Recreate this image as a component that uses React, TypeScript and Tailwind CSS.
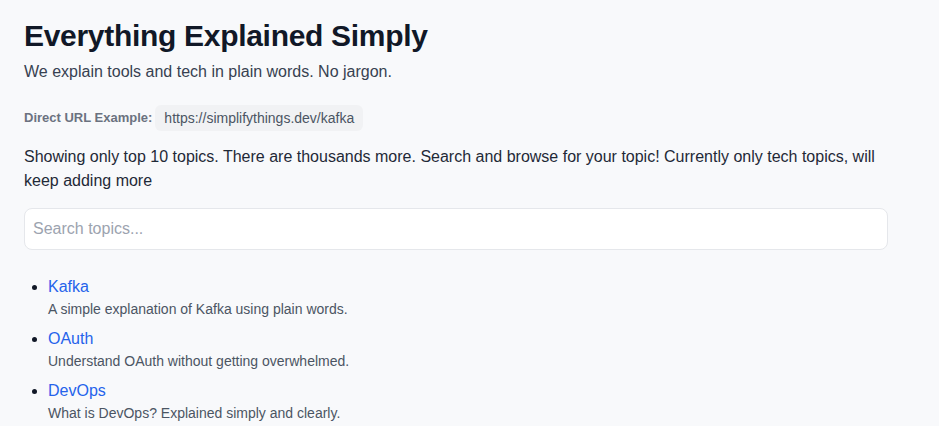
import React, { useState } from 'react';

type Topic = {
    name: string;
    slug: string;
    description: string;
};

const topics: Topic[] = [
    { name: 'Kafka', slug: 'kafka', description: 'A simple explanation of Kafka using plain words.' },
    { name: 'OAuth', slug: 'oauth', description: 'Understand OAuth without getting overwhelmed.' },
    { name: 'DevOps', slug: 'devops', description: 'What is DevOps? Explained simply and clearly.' },
    { name: 'Docker', slug: 'docker', description: 'Containers explained without the buzzwords.' },
    { name: 'Kubernetes', slug: 'kubernetes', description: 'How Kubernetes runs your apps, in plain words.' },
];

export default function App() {
    const [query, setQuery] = useState('');

    const filtered = topics.filter((t) => t.name.toLowerCase().includes(query.toLowerCase()));

    return (
        <div className="min-h-screen bg-[#f8f9fb] font-['Segoe_UI','Liberation_Sans',sans-serif] text-[#1f2937]">
            <div className="w-[912px] px-6 pt-[15px] pb-10">
                <h1 className="text-[30px] font-bold leading-[42px] tracking-[-0.3px] text-[#111827]">
                    Everything Explained Simply
                </h1>
                <p className="mt-[3px] text-base leading-6 text-[#374151]">
                    We explain tools and tech in plain words. No jargon.
                </p>

                {/* Direct URL */}
                <div className="mt-[21px] flex items-center gap-[3px]">
                    <span className="text-[13px] font-semibold text-[#6b7280]">Direct URL Example:</span>
                    <code className="rounded-md bg-[#f1f2f4] px-[9px] py-[4px] font-['Segoe_UI','Liberation_Sans',sans-serif] text-[14px] leading-[18px] text-[#4b5563]">
                        https://simplifythings.dev/kafka
                    </code>
                </div>

                <p className="mt-[14px] text-base leading-6 text-[#1f2937]">
                    Showing only top 10 topics. There are thousands more. Search and browse for your topic! Currently only
                    tech topics, will keep adding more
                </p>

                <input
                    type="text"
                    value={query}
                    onChange={(e) => setQuery(e.target.value)}
                    placeholder="Search topics..."
                    className="mt-[15px] h-[42px] w-[864px] rounded-lg border border-[#e5e7eb] bg-white px-2 text-base text-[#1f2937] placeholder:text-[#9ca3af] outline-none"
                />

                {/* Topic list */}
                <ul className="mt-[25px] list-disc pl-6">
                    {filtered.map((t) => (
                        <li key={t.slug} className="mb-[7px] marker:text-[#111827]">
                            <a href={`/${t.slug}`} className="text-base leading-6 text-[#2563eb]">
                                {t.name}
                            </a>
                            <p className="-mt-[1px] text-[14px] leading-[22px] text-[#4b5563]">{t.description}</p>
                        </li>
                    ))}
                </ul>
            </div>
        </div>
    );
}
